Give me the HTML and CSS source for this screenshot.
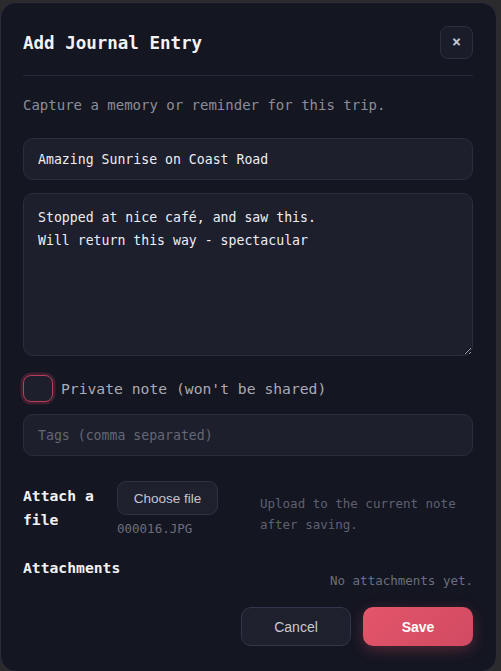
FILE: index.html
```html
<!DOCTYPE html>
<html lang="en">
<head>
<meta charset="utf-8">
<title>Add Journal Entry</title>
<link rel="stylesheet" href="styles.css">
</head>
<body>
<div class="modal">
  <div class="modal-header">
    <h2 class="modal-title">Add Journal Entry</h2>
    <button class="close-btn" type="button" aria-label="Close">×</button>
  </div>
  <p class="subtitle">Capture a memory or reminder for this trip.</p>
  <input class="field field-title" type="text" value="Amazing Sunrise on Coast Road">
  <textarea class="field field-body">Stopped at nice café, and saw this.
Will return this way - spectacular</textarea>
  <label class="private-row">
    <span class="check"></span>
    <span class="private-text">Private note (won't be shared)</span>
  </label>
  <input class="field field-tags" type="text" placeholder="Tags (comma separated)">
  <div class="attach-row">
    <div class="section-label">Attach a file</div>
    <div class="file-col">
      <button class="choose-btn" type="button">Choose file</button>
      <div class="file-name">000016.JPG</div>
    </div>
    <div class="hint">Upload to the current note after saving.</div>
  </div>
  <div class="attachments-row">
    <div class="section-label">Attachments</div>
    <div class="empty">No attachments yet.</div>
  </div>
  <div class="footer">
    <button class="btn btn-cancel" type="button">Cancel</button>
    <button class="btn btn-save" type="button">Save</button>
  </div>
</div>
</body>
</html>
```
FILE: styles.css
```css
* { box-sizing: border-box; }
html, body { margin: 0; padding: 0; }
body {
  background: #2b2b2e;
  font-family: "DejaVu Sans Mono", monospace;
  overflow: hidden;
  height: 671px;
}
.modal {
  margin-top: 2px;
  width: 497px;
  height: 670px;
  background: #141622;
  border: 1px solid #2a2c38;
  border-radius: 16px;
  padding: 23px 23px 0 22px;
  display: flex;
  flex-direction: column;
}
.modal-header {
  display: flex;
  align-items: center;
  justify-content: space-between;
  padding-bottom: 16px;
  border-bottom: 1px solid #252736;
}
.modal-title {
  margin: 0;
  font-size: 17.5px;
  font-weight: bold;
  color: #f2f2f5;
}
.close-btn {
  width: 33px;
  height: 33px;
  border-radius: 8px;
  border: 1px solid #2d2f3e;
  background: #1a1c29;
  color: #c4c5cd;
  font-family: "DejaVu Sans Mono", monospace;
  font-weight: bold;
  font-size: 15px;
  padding: 0;
  line-height: 1;
}
.subtitle {
  margin: 19px 0 0;
  font-size: 14px;
  line-height: 20px;
  color: #8c8d98;
}
.field {
  display: block;
  width: 100%;
  background: #1d1f2d;
  border: 1px solid #2c2e3d;
  border-radius: 10px;
  color: #eeeef2;
  font-family: "DejaVu Sans Mono", monospace;
  font-size: 13.2px;
  outline: none;
}
.field-title {
  margin-top: 23px;
  height: 42px;
  padding: 0 14px;
}
.field-body {
  margin-top: 13px;
  height: 163px;
  padding: 13px 14px;
  line-height: 22.5px;
  resize: vertical;
}
.field-tags {
  margin-top: 13px;
  height: 42px;
  padding: 0 14px;
}
.field-tags::placeholder { color: #656775; }
.private-row {
  margin-top: 19px;
  height: 26px;
  display: flex;
  align-items: center;
  gap: 8px;
}
.check {
  width: 30px;
  height: 27px;
  border-radius: 8px;
  border: 1.5px solid #b83d5a;
  background: #1d1f2d;
  box-shadow: 0 0 0 2.5px rgba(200, 60, 90, 0.25);
}
.private-text {
  font-size: 14.7px;
  color: #a9aab4;
}
.attach-row {
  margin-top: 25px;
  display: grid;
  grid-template-columns: 78px auto 1fr;
  column-gap: 16px;
  align-items: start;
}
.section-label {
  font-size: 14.7px;
  font-weight: bold;
  line-height: 24px;
  color: #f2f2f5;
}
.attach-row .section-label { padding-top: 3px; }
.choose-btn {
  display: block;
  width: 101px;
  height: 34px;
  border-radius: 9px;
  border: 1px solid #30323f;
  background: #1e202d;
  color: #c5c6cd;
  font-family: "Liberation Sans", Arial, sans-serif;
  font-size: 13.5px;
  padding: 0;
}
.file-name {
  margin-top: 5px;
  font-size: 12.5px;
  line-height: 18px;
  color: #6c6e7b;
}
.hint {
  margin: 12px 0 0 26px;
  max-width: 205px;
  font-size: 12.5px;
  line-height: 21px;
  color: #5f6170;
}
.attachments-row {
  margin-top: 18px;
  display: flex;
  justify-content: space-between;
  align-items: flex-start;
}
.empty {
  margin-top: 16px;
  font-size: 12.5px;
  line-height: 18px;
  color: #6c6e7b;
}
.footer {
  margin-top: 17px;
  display: flex;
  justify-content: flex-end;
  gap: 12px;
}
.btn {
  width: 110px;
  height: 39px;
  border-radius: 10px;
  font-family: "Liberation Sans", Arial, sans-serif;
  font-size: 14px;
  padding: 0;
}
.btn-cancel {
  background: #1e202d;
  border: 1px solid #33354a;
  color: #c9cad2;
}
.btn-save {
  background: linear-gradient(135deg, #e3556a, #d14a61);
  border: none;
  color: #ffffff;
  font-weight: bold;
  box-shadow: 0 4px 14px rgba(224, 80, 100, 0.3);
}
```
